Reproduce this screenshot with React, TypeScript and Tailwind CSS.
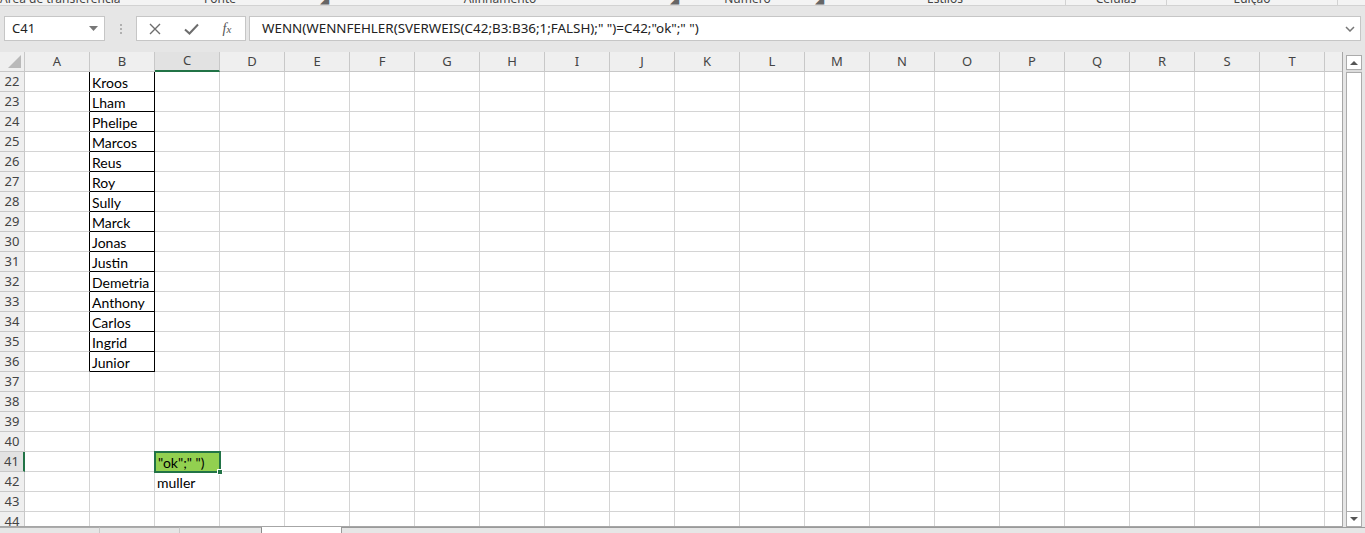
import React from "react";

const COLS = ["A","B","C","D","E","F","G","H","I","J","K","L","M","N","O","P","Q","R","S","T"];
const names: Record<number, string> = {
  22: "Kroos", 23: "Lham", 24: "Phelipe", 25: "Marcos", 26: "Reus", 27: "Roy", 28: "Sully",
  29: "Marck", 30: "Jonas", 31: "Justin", 32: "Demetria", 33: "Anthony", 34: "Carlos", 35: "Ingrid", 36: "Junior",
};
const ROWS = Array.from({ length: 23 }, (_, i) => 22 + i);

const ui = "font-['Noto_Sans',sans-serif]";
const cellFont = "font-['Lato',sans-serif] text-[14px] text-black";

function RibbonLabel({ w, text, launcher }: { w: number; text: string; launcher?: boolean }) {
  return (
    <div className="flex items-end shrink-0 h-[5px] overflow-hidden" style={{ width: w }}>
      <span className="flex-1 text-center text-[12px] leading-[12px] mb-[0px] text-[#444] whitespace-nowrap">{text}</span>
      {launcher && <span className="w-[10px] text-[12px] leading-[12px] mb-[0px] text-[#666]">◢</span>}
    </div>
  );
}

function Cell({ col, row }: { col: string; row: number }) {
  const inB = col === "B" && row >= 22 && row <= 36;
  const leftOfB = col === "A" && row >= 22 && row <= 36;
  let border = "border-r border-b border-[#d4d4d4]";
  if (inB) border = "border-r border-b border-black";
  else if (leftOfB) border = "border-b border-[#d4d4d4] border-r border-r-black";
  if (col === "C" && row === 41) {
    return (
      <div className="w-[65px] h-[20px] shrink-0 border-r border-b border-[#d4d4d4] relative">
        <div className="absolute left-[-1px] top-[-1px] w-[67px] h-[22px] border-2 border-[#217346] bg-[#92d050] flex items-end pl-[2px] z-10">
          <span className={`${cellFont} leading-[17px]`}>"ok";" ")</span>
          <div className="absolute right-[-4px] bottom-[-4px] w-[6px] h-[6px] bg-[#217346] border border-white" />
        </div>
      </div>
    );
  }
  let text = "";
  if (col === "B" && names[row]) text = names[row];
  if (col === "C" && row === 42) text = "muller";
  return (
    <div className={`w-[65px] h-[20px] shrink-0 ${border} flex items-end pl-[2px] overflow-visible whitespace-nowrap`}>
      {text && <span className={`${cellFont} leading-[17px]`}>{text}</span>}
    </div>
  );
}

export default function App() {
  return (
    <div className={`w-[1365px] h-[533px] overflow-hidden bg-[#e6e6e6] flex flex-col ${ui}`}>
      {/* ribbon bottom strip */}
      <div className="h-[6px] bg-[#f3f3f3] border-b border-[#d2d2d2] flex overflow-hidden shrink-0">
        <RibbonLabel w={120} text="Área de transferência" launcher />
        <RibbonLabel w={210} text="Fonte" launcher />
        <RibbonLabel w={350} text="Alinhamento" launcher />
        <RibbonLabel w={145} text="Número" launcher />
        <RibbonLabel w={240} text="Estilos" />
        <div className="w-px h-[5px] bg-[#d2d2d2]" />
        <RibbonLabel w={100} text="Células" />
        <div className="w-px h-[5px] bg-[#d2d2d2]" />
        <RibbonLabel w={170} text="Edição" />
        <div className="w-px h-[5px] bg-[#d2d2d2]" />
      </div>

      {/* formula bar */}
      <div className="h-[46px] shrink-0 flex items-start pt-[10px]">
        <div className="ml-[4px] w-[101px] h-[25px] bg-white border border-[#c6c6c6] flex items-center justify-between pl-[7px] pr-[6px]">
          <span className="text-[13px] text-[#222]">C41</span>
          <svg width="9" height="5" viewBox="0 0 9 5"><path d="M0 0h9L4.5 5z" fill="#777" /></svg>
        </div>
        <div className="w-[31px] h-[25px] flex flex-col items-center justify-center gap-[2px]">
          <div className="w-[2px] h-[2px] bg-[#b0b0b0]" />
          <div className="w-[2px] h-[2px] bg-[#b0b0b0]" />
          <div className="w-[2px] h-[2px] bg-[#b0b0b0]" />
        </div>
        <div className="w-[110px] h-[25px] bg-white border border-[#c6c6c6] flex items-center">
          <div className="w-[36px] flex justify-center">
            <svg width="12" height="12" viewBox="0 0 12 12"><path d="M1 1l10 10M11 1L1 11" stroke="#6d6d6d" strokeWidth="1.4" /></svg>
          </div>
          <div className="w-[36px] flex justify-center">
            <svg width="15" height="12" viewBox="0 0 15 12"><path d="M1 6.5l4.5 4L14 1.5" stroke="#6d6d6d" strokeWidth="2" fill="none" /></svg>
          </div>
          <div className="w-[36px] flex justify-center">
            <span className="font-['Liberation_Serif',serif] italic text-[14px] text-[#555]">f<span className="text-[11px]">x</span></span>
          </div>
        </div>
        <div className="ml-[3px] w-[1112px] h-[25px] bg-white border border-[#c6c6c6] flex items-center pl-[12px] pr-[5px]">
          <span className="flex-1 text-[13.4px] text-[#222] whitespace-nowrap">WENN(WENNFEHLER(SVERWEIS(C42;B3:B36;1;FALSH);" ")=C42;"ok";" ")</span>
          <svg width="10" height="6" viewBox="0 0 10 6"><path d="M1 1l4 4 4-4" stroke="#777" strokeWidth="1.5" fill="none" /></svg>
        </div>
      </div>

      {/* sheet + scrollbar */}
      <div className="h-[475px] shrink-0 flex">
        <div className="w-[1343px] h-[475px] overflow-hidden bg-white border-r border-b border-[#a6a6a6] flex flex-col">
          {/* header row */}
          <div className="h-[20px] shrink-0 flex bg-[#efefef]">
            <div className="w-[25px] h-[20px] shrink-0 border-r border-b border-[#c8c8c8] flex items-end justify-end pr-[3px] pb-[3px]">
              <svg width="13" height="13" viewBox="0 0 13 13"><path d="M13 0v13H0z" fill="#b9b9b9" /></svg>
            </div>
            {COLS.map((c) => (
              <div
                key={c}
                className={`w-[65px] h-[20px] shrink-0 border-r border-[#c8c8c8] flex items-center justify-center text-[13px] text-[#444] ${c === "C" ? "border-b-2 border-b-[#217346] bg-[#e2e2e2]" : "border-b border-b-[#c8c8c8]"}`}
              >
                {c}
              </div>
            ))}
            <div className="w-[18px] h-[20px] shrink-0 border-b border-[#c8c8c8]" />
          </div>
          {ROWS.map((r) => (
            <div key={r} className="h-[20px] shrink-0 flex">
              <div className={`w-[25px] h-[20px] shrink-0 border-b border-[#c8c8c8] flex items-center justify-center text-[13px] text-[#444] ${r === 41 ? "bg-[#e2e2e2] border-r-2 border-r-[#217346]" : "bg-[#efefef] border-r border-r-[#c8c8c8]"}`}>
                {r}
              </div>
              {COLS.map((c) => (
                <Cell key={c} col={c} row={r} />
              ))}
              <div className="w-[18px] h-[20px] shrink-0 border-b border-[#d4d4d4]" />
            </div>
          ))}
        </div>
        {/* vertical scrollbar */}
        <div className="w-[22px] h-[475px] flex flex-col items-center pt-[3px]">
          <div className="w-[16px] h-[15px] bg-white border border-[#ababab] flex items-center justify-center">
            <svg width="8" height="4" viewBox="0 0 8 4"><path d="M0 4h8L4 0z" fill="#555" /></svg>
          </div>
          <div className="w-[16px] h-[2px] bg-[#dcdcdc]" />
          <div className="w-[16px] flex-1 bg-white border border-[#ababab]" />
          <div className="w-[16px] h-[15px] bg-white border border-[#ababab] border-t-0 flex items-center justify-center">
            <svg width="8" height="4" viewBox="0 0 8 4"><path d="M0 0h8L4 4z" fill="#555" /></svg>
          </div>
        </div>
      </div>

      {/* sheet tabs bar */}
      <div className="h-[6px] shrink-0 flex">
        <div className="w-[100px] h-[6px] border-t border-[#ababab] border-r border-r-[#c8c8c8]" />
        <div className="w-[80px] h-[6px] border-t border-[#ababab] border-r border-r-[#c8c8c8]" />
        <div className="w-[82px] h-[6px] border-t border-[#ababab] border-r border-r-[#8a8a8a]" />
        <div className="w-[79px] h-[6px] bg-white" />
        <div className="flex-1 h-[6px] border-t border-l border-[#9a9a9a] bg-[#e6e6e6]" />
      </div>
    </div>
  );
}
